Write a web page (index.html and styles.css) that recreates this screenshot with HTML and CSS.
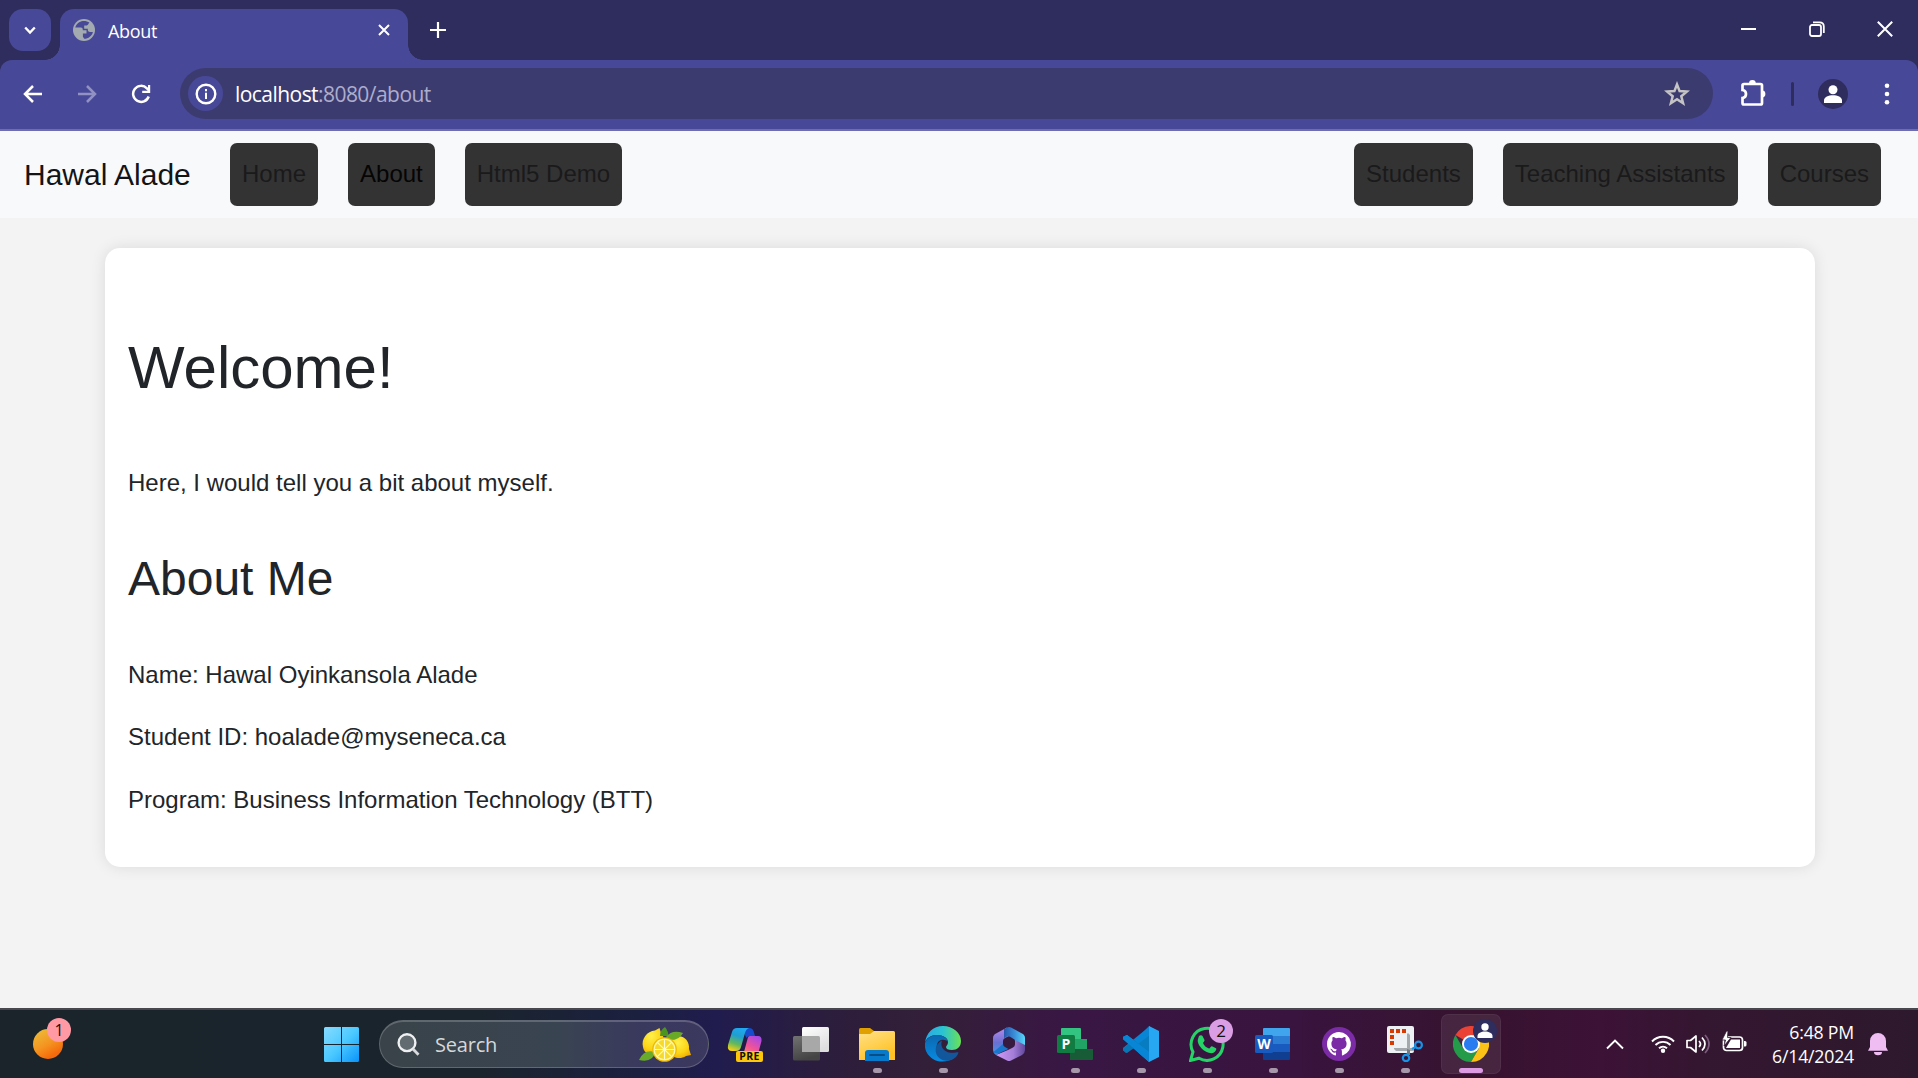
FILE: index.html
```html
<!DOCTYPE html>
<html lang="en">
<head>
<meta charset="utf-8">
<title>About</title>
<link rel="stylesheet" href="styles.css">
</head>
<body>
<div class="screen">
  <header class="tabstrip">
    <div class="tab-search"><svg width="12" height="9" viewBox="0 0 12 9"><path d="M1.2 1.5 6 6.5l4.8-5" fill="none" stroke="#fff" stroke-width="2.4"/></svg></div>
    <div class="tab">
      <svg class="globe" width="22" height="22" viewBox="0 0 22 22"><circle cx="11" cy="11" r="11" fill="#a3abb0"/><path d="M9.8 2.1C6.500 2.500 3.200 5 2.300 8.600l5.200 0c2.200 0 2.300 1.200 2.300 2.700h3.700v3.300H9.900v3.200l1.300 2c4.300 0 7.800-3 8.700-6.800h-2.600c-2.400 0-2.500-1.300-2.500-3.200h-3.600V6.400h2.600c1.300 0 1.300-1.300 2.600-2.800-1.800-1.100-4.200-1.800-6.600-1.500z" fill="#484898"/></svg>
      <span class="tab-title">About</span>
      <svg class="tab-close" width="12" height="12" viewBox="0 0 12 12"><path d="M1 1l10 10M11 1 1 11" stroke="#fff" stroke-width="2"/></svg>
    </div>
    <svg class="new-tab" width="16" height="16" viewBox="0 0 16 16"><path d="M8 0v16M0 8h16" stroke="#fff" stroke-width="2.200"/></svg>
    <div class="window-controls">
      <svg width="16" height="16" viewBox="0 0 16 16"><path d="M0 8h15" stroke="#fff" stroke-width="2"/></svg>
      <svg width="16" height="16" viewBox="0 0 16 16"><rect x="1" y="4" width="11" height="11" rx="2" fill="none" stroke="#fff" stroke-width="1.800"/><path d="M4 1.300h6.500Q14.800 1.300 14.800 5.500V12" fill="none" stroke="#fff" stroke-width="1.800"/></svg>
      <svg width="16" height="16" viewBox="0 0 16 16"><path d="M.8.8l14.400 14.400M15.200.8.8 15.200" stroke="#fff" stroke-width="2"/></svg>
    </div>
  </header>

  <div class="toolbar-back"><div class="toolbar">
    <svg class="back" width="20" height="20" viewBox="0 0 20 20"><path d="M19 10H2.500M10 2l-8 8 8 8" fill="none" stroke="#fff" stroke-width="2.5"/></svg>
    <svg class="forward" width="20" height="20" viewBox="0 0 20 20"><path d="M1 10h16.500M10 2l8 8-8 8" fill="none" stroke="#9191c3" stroke-width="2.5"/></svg>
    <svg class="reload" width="20" height="20" viewBox="0 0 20 20"><path d="M17.700 12.500A8 8 0 1 1 15.900 4.300L18 6.500" fill="none" stroke="#fff" stroke-width="2.5"/><path d="M19.200 1v8h-8V6.800h5.800V1z" fill="#fff"/></svg>
    <div class="omnibox">
      <span class="site-info"><svg width="22" height="22" viewBox="0 0 22 22"><circle cx="11" cy="11" r="9.300" fill="none" stroke="#fff" stroke-width="2.400"/><path d="M11 9.800V16M11 6v2.200" stroke="#fff" stroke-width="2"/></svg></span>
      <span class="url"><b>localhost</b><i>:8080/about</i></span>
      <svg class="star" width="26" height="26" viewBox="0 0 26 26"><path d="M13 3.400l2.600 6.700 7.200.5-5.500 4.600 1.800 7-6.100-3.900-6.100 3.900 1.800-7-5.500-4.600 7.200-.5z" fill="none" stroke="#c4c4c4" stroke-width="2.500"/></svg>
    </div>
    <svg class="puzzle" width="28" height="28" viewBox="0 0 28 28"><path d="M4 5h16.500q1.500 0 1.500 1.500v17.500q0 1.500-1.500 1.500H4q-1.500 0-1.500-1.500v-5q3.500-.5 3.500-4t-3.500-4V6.500Q2.500 5 4 5z" fill="none" stroke="#fff" stroke-width="2.700"/><path d="M9 4.500a3.400 3.400 0 0 1 6.800 0zM22 11.600a3.400 3.400 0 0 1 0 6.800z" fill="#fff"/></svg>
    <span class="divider"></span>
    <svg class="profile" width="30" height="30" viewBox="0 0 30 30"><circle cx="15" cy="15" r="15" fill="#2e2d5e"/><circle cx="15" cy="10.700" r="4.500" fill="#fff"/><path d="M6 24v-2.500c0-7 18-7 18 0V24z" fill="#fff"/></svg>
    <svg class="menu-dots" width="6" height="22" viewBox="0 0 6 22"><g fill="#fff"><circle cx="3" cy="2.700" r="2.300"/><circle cx="3" cy="11" r="2.300"/><circle cx="3" cy="19.300" r="2.300"/></g></svg>
  </div></div>

  <main class="page">
    <nav class="navbar">
      <a class="brand">Hawal Alade</a>
      <div class="links"><a class="link">Home</a><a class="link active">About</a><a class="link">Html5 Demo</a></div>
      <div class="links right"><a class="link">Students</a><a class="link">Teaching Assistants</a><a class="link">Courses</a></div>
    </nav>
    <section class="card">
      <h1>Welcome!</h1>
      <p class="intro">Here, I would tell you a bit about myself.</p>
      <h2>About Me</h2>
      <p>Name: Hawal Oyinkansola Alade</p>
      <p>Student ID: hoalade@myseneca.ca</p>
      <p>Program: Business Information Technology (BTT)</p>
    </section>
  </main>

  <footer class="taskbar">
    <div class="weather"><span class="badge">1</span></div>
    <svg class="start" width="35" height="35" viewBox="0 0 35 35"><defs><linearGradient id="win" x1="0" y1="0" x2="1" y2="1"><stop stop-color="#87dcff"/><stop offset=".5" stop-color="#4ccaff"/><stop offset="1" stop-color="#0993fa"/></linearGradient></defs><path d="M1.500 0H17v17H0V1.500Q0 0 1.500 0zM18 0h15.500Q35 0 35 1.500V17H18zM0 18h17v17H1.500Q0 35 0 33.500zM18 18h17v15.500q0 1.500-1.500 1.500H18z" fill="url(#win)"/></svg>
    <div class="search">
      <svg width="23" height="23" viewBox="0 0 23 23"><circle cx="10" cy="9.700" r="8.400" fill="#626b70" stroke="#eef0f1" stroke-width="2.400"/><path d="M16 16l5.500 5.700" stroke="#d8dadb" stroke-width="2.800"/></svg>
      <span>Search</span>
      <svg class="lemons" width="53" height="36" viewBox="0 0 53 36"><defs><radialGradient id="lem" cx=".4" cy=".3" r=".8"><stop stop-color="#fff04a"/><stop offset=".6" stop-color="#fbd414"/><stop offset="1" stop-color="#eda500"/></radialGradient></defs><path d="M4 20C2 12 8 4 16 3.500l4.500-2.500 1.500 5c6 7 3 19-6 21C10 28.500 5 26 4 20z" fill="url(#lem)"/><path d="M36 10c8-3 15 4 14 12l2 6-5 1c-6 4-14 2-16-4s0-13 5-15z" fill="url(#lem)"/><path d="M21 9q0-6 5-9 4 5 3 9z" fill="#4b941e"/><path d="M27 10q6-8 17-4-4 8-15 7z" fill="#68aa28"/><path d="M0 33q5-11 16-8-2 11-16 8z" fill="#69aa2b"/><circle cx="25.500" cy="22.500" r="12.300" fill="#eeb900"/><circle cx="25.500" cy="22.500" r="11" fill="#fff6a8"/><circle cx="25.500" cy="22.500" r="9.700" fill="#f7d927"/><path d="M25.500 12.500v20M15.500 22.500h20M18.400 15.400l14.200 14.200M32.600 15.400 18.400 29.600" stroke="#fffbd0" stroke-width="1.200"/></svg>
    </div>
    <div class="apps">
      <div class="app"><svg width="36" height="36" viewBox="0 0 36 36"><defs><linearGradient id="cp1" x1=".6" y1="0" x2=".3" y2="1"><stop stop-color="#20a8f0"/><stop offset=".35" stop-color="#1f9fd0"/><stop offset=".7" stop-color="#64b85b"/><stop offset="1" stop-color="#f4cf17"/></linearGradient><linearGradient id="cp2" x1=".8" y1="0" x2=".2" y2="1"><stop stop-color="#a648e8"/><stop offset=".5" stop-color="#f05398"/><stop offset="1" stop-color="#ff9a52"/></linearGradient></defs><path d="M17 2h5q3.500 0 4.500 3l1.500 5h-5q-2.500 0-3.500 2l-2-4z" fill="#174dcc"/><path d="M10 2h12q-3 1-4 5l-4 14q-1 4-5 4H5q-5 0-4-6L5 6q1-4 5-4z" fill="url(#cp1)"/><path d="M23 10h8q4 0 3.500 5L31 28q-1 3-4 3H11q5-1 6-5l3.500-13q.5-3 2.500-3z" fill="url(#cp2)"/></svg><span class="pre">PRE</span></div>
      <div class="app"><svg width="36" height="36" viewBox="0 0 36 36"><defs><linearGradient id="tv" x2=".6" y2="1"><stop stop-color="#fff"/><stop offset="1" stop-color="#dedede"/></linearGradient><linearGradient id="tw" x2=".3" y2="1"><stop stop-color="#727272"/><stop offset="1" stop-color="#444"/></linearGradient></defs><rect y="10" width="27" height="24.500" rx="1.500" fill="url(#tw)"/><rect x="9" y="1" width="27" height="25" rx="1.500" fill="url(#tv)"/><path d="M9 10h16.500q1.500 0 1.500 1.500V26H9z" fill="#a8a8a8"/></svg></div>
      <div class="app on"><svg width="36" height="36" viewBox="0 0 36 36"><defs><linearGradient id="fo" x2=".5" y2="1"><stop stop-color="#ffe289"/><stop offset="1" stop-color="#ffc123"/></linearGradient></defs><path d="M0 9V3.500Q0 2 1.500 2H11l4 3v5z" fill="#dfa000"/><path d="M0 8h11l4-3h19.500Q36 5 36 6.500V34H0z" fill="url(#fo)"/><path d="M6 35v-8q0-3 3-3h18q3 0 3 3v8z" fill="#087acb"/><path d="M11 29h14" stroke="#064e85" stroke-width="2" stroke-linecap="round"/></svg></div>
      <div class="app on"><svg width="36" height="36" viewBox="0 0 36 36"><defs><linearGradient id="ed1"><stop stop-color="#29a9e6"/><stop offset=".5" stop-color="#2bc3d2"/><stop offset="1" stop-color="#6be254"/></linearGradient><linearGradient id="ed2" x2="0" y2="1"><stop stop-color="#0b67af"/><stop offset="1" stop-color="#078ce3"/></linearGradient></defs><path d="M0 17C1 7 8 0 18 0s18 7 18 15c0 6-4 9-9 9-4 0-6-1-6-3 0-1 2-2 2-5 0-4-5-7-11-7S1 12 0 17z" fill="url(#ed1)"/><path d="M0 17C2 11 8 9 12 9c7 0 11 4 11 7 0-2-7-4-10 0-4 6 1 17 16 16-5 4-15 5-21 1C3 30-1 24 0 17z" fill="url(#ed2)"/><path d="M17 14.500c-7 3-9 13-2 18 4 3 10 3 14 0 2-1 4-4 4.500-6-.5-1-7 2-12-1-5-2.500-6-7-4.500-11z" fill="#12569b"/></svg></div>
      <div class="app"><svg width="32" height="34" viewBox="0 0 32 34"><defs><linearGradient id="m1" x2="0" y2="1"><stop stop-color="#b78bec"/><stop offset=".55" stop-color="#6a6fd0"/><stop offset="1" stop-color="#3f9be8"/></linearGradient><linearGradient id="m2"><stop stop-color="#2857ac"/><stop offset=".5" stop-color="#3a8fd8"/><stop offset="1" stop-color="#58d6fa"/></linearGradient><linearGradient id="m3"><stop stop-color="#cf9af5"/><stop offset=".6" stop-color="#a47ed8"/><stop offset="1" stop-color="#61479d"/></linearGradient></defs><path d="M14 .600 3 6.500Q0 8 0 11v12q0 3 3 5l8-5q-1-1-1-3v-6q0-2 2-3l4-2z" fill="url(#m1)"/><path d="M11 2.200 14 .600q2-1 4 0L29 6.500Q32 8 32 11v9l-10-6-.500-1.500-4.500-2.700q-2-1-4 .300l-2 1.100z" fill="url(#m2)"/><path d="M32 18v5q0 3-3 5l-11 5.500q-2 1-4 0L3 28l12-5 5-2.500q2-1 2-3V13z" fill="url(#m3)"/><path d="M.500 25q2.500 2.500 6 1l9-4-3.500-2q-2-1-2-3z" fill="#1876cd"/></svg></div>
      <div class="app on"><svg width="36" height="36" viewBox="0 0 36 36"><path d="M5 2h18q1 0 1 1v10H4V3q0-1 1-1z" fill="#34c481"/><path d="M10 13h20v10H10z" fill="#22a366"/><path d="M13 23h23v10q0 1-1 1H13z" fill="#185c37"/><rect y="9" width="18" height="18" rx="1.500" fill="#107c41"/><text x="9" y="23" text-anchor="middle" class="letter">P</text></svg></div>
      <div class="app on"><svg width="36" height="36" viewBox="0 0 36 36"><path d="M26 0 12 15 4 9 0 11v2l26 23z" fill="#087cc0"/><path d="M0 24l3 3 24-18V0L0 22z" fill="#0886d5"/><path d="M0 11l4-2 22 17v10L0 13z" fill="#0886d5"/><path d="M0 22.500 11 14l5 4.500L4 27 0 24.500z" fill="#0876b5"/><path d="M0 11l4-2 22 17v10L0 13z" fill="#0886d5"/><path d="M26 0l10 5v26l-10 5z" fill="#27a7f2"/></svg></div>
      <div class="app on"><svg width="36" height="36" viewBox="0 0 36 36"><path d="M1.500 34.500 4 26A16 16 0 1 1 10 32.200z" fill="none" stroke="#25d366" stroke-width="3"/><path d="M10 10c1-1 3-1 3.500 0l2 4c.5 1-1.500 2.500-1.500 3 1 3 4 5 6 5.500 1 0 2-2.500 3-2.200l4 2c1 .7-.5 4-3 4.700-7 1.500-17-8-15-14z" fill="#25d366"/></svg><span class="badge purple">2</span></div>
      <div class="app on"><svg width="36" height="36" viewBox="0 0 36 36"><path d="M8 10V3q0-1 1-1h25q1 0 1 1v7z" fill="#41a5ee"/><path d="M8 10h27v8H8z" fill="#2b7cd3"/><path d="M8 18h27v8H8z" fill="#185abd"/><path d="M8 26h27v7q0 1-1 1H9q-1 0-1-1z" fill="#103f91"/><rect y="9" width="18" height="18" rx="1.500" fill="#185abd"/><text x="9" y="23" text-anchor="middle" class="letter">W</text></svg></div>
      <div class="app on"><svg width="34" height="34" viewBox="0 0 34 34"><circle cx="17" cy="17" r="17" fill="#7b2ba6"/><path transform="translate(5 5)" fill="#fff" d="M12 0C5.400 0 0 5.400 0 12c0 5.300 3.400 9.800 8.200 11.400.6.100.8-.3.800-.6v-2.200c-3.300.7-4-1.400-4-1.400-.5-1.400-1.300-1.800-1.300-1.800-1.100-.7.100-.7.100-.7 1.200.1 1.800 1.200 1.800 1.200 1.100 1.800 2.800 1.300 3.500 1 .1-.8.400-1.300.8-1.600-2.700-.3-5.500-1.300-5.500-5.900 0-1.300.5-2.400 1.200-3.200-.1-.3-.5-1.500.1-3.200 0 0 1-.3 3.300 1.200a11.500 11.500 0 0 1 6 0c2.300-1.500 3.300-1.200 3.300-1.200.7 1.700.2 2.900.1 3.200.8.800 1.200 1.900 1.200 3.200 0 4.600-2.800 5.600-5.500 5.900.4.400.8 1.100.8 2.200v3.300c0 .3.200.7.800.6A12 12 0 0 0 12 0z"/></svg></div>
      <div class="app on"><svg width="36" height="36" viewBox="0 0 36 36"><rect width="27" height="27" rx="2" fill="#eef1f4"/><path d="M3 3h4v4H3zM9 3h4v4H9zM15 3h4v4h-4zM3 9h4v4H3zM3 15h4v4H3z" fill="#d83b01"/><path d="M21 7l2 2v13h4v3h-4v4h-3v-4H9l-2-2v-1h13V8z" fill="#a4a9ad"/><path d="M20 23l3 1v5h-3z" fill="#737a80"/><g fill="none" stroke="#1594e8" stroke-width="2.200"><circle cx="31.500" cy="19" r="3.400"/><circle cx="19" cy="32" r="3.200"/><path d="M25 23l3.500-2M21 27l-1 2"/></g></svg></div>
      <div class="app on current"><svg width="36" height="36" viewBox="0 0 36 36"><path d="M18 18 2.400 9A18 18 0 0 1 33.600 9z" fill="#ea4335"/><path d="M18 18l-7.800 4.500L2.400 9A18 18 0 0 0 18 36l7.800-13.500z" fill="#249b48"/><path d="M18 9h15.600A18 18 0 0 1 18 36l7.800-13.500z" fill="#fbc116"/><circle cx="18" cy="18" r="9" fill="#fff"/><circle cx="18" cy="18" r="7.100" fill="#297cf0"/></svg><svg class="person" width="24" height="24" viewBox="0 0 24 24"><circle cx="12" cy="12" r="12" fill="#2e2d5e"/><circle cx="12" cy="8" r="3.700" fill="#fff"/><path d="M4.500 19v-2c0-6 15-6 15 0v2z" fill="#fff"/></svg></div>
    </div>
    <div class="tray">
      <svg class="chev" width="18" height="11" viewBox="0 0 18 11"><path d="M1 9.500l8-8 8 8" fill="none" stroke="#fff" stroke-width="1.900"/></svg>
      <svg class="wifi" width="24" height="20" viewBox="0 0 24 20"><g fill="none" stroke="#fff" stroke-width="1.900"><path d="M1 7.500a15 15 0 0 1 22 0M4.500 11a10.500 10.500 0 0 1 15 0M8 14.200a6 6 0 0 1 8 0"/></g><circle cx="12" cy="16.800" r="2.200" fill="#fff"/></svg>
      <svg class="speaker" width="24" height="20" viewBox="0 0 24 20"><g fill="none" stroke="#fff" stroke-width="1.700" stroke-linejoin="round"><path d="M1 6.500h3.500L10 2v16l-5.500-4.500H1z"/><path d="M13 7q3 3 0 6M16 3.500q6 6.500 0 13"/><path d="M19 1q8 9 0 18" stroke="#7b5c7c"/></g></svg>
      <svg class="battery" width="25" height="22" viewBox="0 0 25 22"><rect x="1.500" y="6" width="19" height="13.500" rx="3" fill="none" stroke="#fff" stroke-width="1.700"/><path d="M22 10h1q1.500 0 1.500 1.500v2.500q0 1.500-1.500 1.500h-1z" fill="#fff"/><path d="M9 8.500h9v8.500H4z" fill="#fff"/><path d="M4.500 0 0 9h3.500L2 15l7-8.500H5.500L6 0z" fill="#fff" stroke="#32162f" stroke-width=".8"/></svg>
      <div class="clock"><span>6:48 PM</span><span>6/14/2024</span></div>
      <svg class="bell" width="20" height="24" viewBox="0 0 20 24"><path d="M2 15V9a8 8 0 0 1 16 0v6l2 3.800H0z" fill="#f0bdf3"/><path d="M6 20h8a4 3.300 0 0 1-8 0z" fill="#f0bdf3"/></svg>
    </div>
  </footer>
</div>
</body>
</html>
```
FILE: styles.css
```css
* { box-sizing: border-box; }
body { margin: 0; overflow: hidden; font-family: "Liberation Sans", Arial, sans-serif; color: #212529; }
svg { display: block; flex: none; }
.screen { width: 1918px; height: 1078px; display: flex; flex-direction: column; }

.tabstrip { height: 60px; flex: none; background: #2e2d5e; display: flex; align-items: flex-start; padding: 9px 25px 0 9px; font-family: "Open Sans", sans-serif; }
.tab-search { width: 42px; height: 42px; border-radius: 14px; background: #484898; display: flex; align-items: center; justify-content: center; }
.tab { position: relative; width: 348px; height: 51px; margin-left: 9px; padding: 0 18px 9px 13px; border-radius: 14px 14px 0 0; background: #484898; display: flex; align-items: center; }
.tab::before, .tab::after { content: ""; position: absolute; bottom: 0; width: 15px; height: 15px; }
.tab::before { left: -15px; background: radial-gradient(circle at 0 0, transparent 14.5px, #484898 15px); }
.tab::after { right: -15px; background: radial-gradient(circle at 100% 0, transparent 14.5px, #484898 15px); }
.tab-title { margin: 2px auto 0 13px; color: #fff; font-size: 18px; line-height: 24px; letter-spacing: -.3px; }
.new-tab { margin: 13px 0 0 22px; }
.window-controls { margin: 12px 0 0 auto; display: flex; gap: 52px; }

.toolbar-back { background: #2e2d5e; flex: none; }
.toolbar { height: 71px; padding: 0 28px 2px 23px; background: #484898; border-bottom: 2px solid #6e6db0; border-radius: 12px 12px 0 0; display: flex; align-items: center; }
.forward, .reload { margin-left: 34px; }
.omnibox { width: 1533px; height: 51px; margin-left: 29px; padding: 0 23px 0 8px; border-radius: 26px; background: #3c3b70; display: flex; align-items: center; }
.site-info { width: 35px; height: 35px; border-radius: 50%; background: #484898; display: flex; align-items: center; justify-content: center; }
.url { margin: 1px auto 0 12px; font: 21px/28px "Open Sans", sans-serif; letter-spacing: -.55px; }
.url b { font-weight: 400; color: #fff; }
.url i { font-style: normal; color: #adadcc; }
.puzzle { margin-left: 27px; margin-top: -2px; }
.divider { width: 3px; height: 24px; margin-left: 23px; border-radius: 2px; background: #2e2d5e; }
.profile { margin-left: 24px; }
.menu-dots { margin-left: auto; }

.page { flex: 1; min-height: 0; background: #f3f3f3; }
.navbar { height: 87px; padding: 0 37px 0 24px; background: #f8f9fb; display: flex; align-items: center; }
.brand { width: 206px; font-size: 30px; line-height: 45px; color: #141415; white-space: nowrap; }
.links { display: flex; gap: 30px; }
.links.right { margin-left: auto; }
.link { height: 63px; padding: 0 12px; border-radius: 7px; background: #333; color: #1a1a1b; font-size: 24px; line-height: 61px; white-space: nowrap; }
.link.active { color: #050505; }

.card { width: 1710px; height: 619px; margin: 30px 0 0 105px; padding: 84px 23px 0; border-radius: 15px; background: #fff; box-shadow: 0 0 15px rgba(0,0,0,.1); }
.card h1 { margin: 0 0 61px; font-weight: 400; font-size: 60px; line-height: 72px; }
.card h2 { margin: 0 0 49px; font-weight: 400; font-size: 48px; line-height: 58px; }
.card p { margin: 0 0 26.400px; font-size: 24px; line-height: 36px; }
.card .intro { margin-bottom: 49px; }

.taskbar { height: 70px; flex: none; border-top: 2px solid #48474e; background: linear-gradient(90deg, #1b242b 0, #1a242d 480px, #1b2040 640px, #201c4e 715px, #2b1d3d 820px, #331f38 930px, #391744 1060px, #38143e 1300px, #37132f 1480px, #3c1237 1600px, #341630 1700px, #2d192d 1918px); display: flex; align-items: center; padding-left: 33px; font-family: "Open Sans", sans-serif; }
.weather { position: relative; width: 30px; height: 30px; border-radius: 50%; background: linear-gradient(150deg, #edbd38 5%, #f49420 50%, #f46a0c 80%); }
.badge { position: absolute; left: 14px; top: -11px; width: 24px; height: 24px; border-radius: 50%; background: #ff99a4; color: #111; font-size: 16px; line-height: 24px; text-align: center; }
.badge.purple { left: 32px; top: 5px; background: #db9de4; font-size: 17px; }
.start { margin-left: 261px; }
.search { width: 330px; height: 48px; margin-left: 20px; padding: 0 16px 0 17px; border: 1px solid rgba(255,255,255,.2); border-top-width: 2px; border-radius: 24px; background: linear-gradient(90deg, #394349, #394452 55%, #39395e 80%, #3c385f); display: flex; align-items: center; color: #d5d8da; font-size: 20px; letter-spacing: -.2px; }
.search span { margin-left: 15px; }
.lemons { margin-left: auto; }
.apps { margin-left: 6px; display: flex; gap: 6px; }
.app { position: relative; width: 60px; height: 60px; display: flex; align-items: center; justify-content: center; }
.app.on::after { content: ""; position: absolute; left: 25.500px; bottom: 1px; width: 9px; height: 5px; border-radius: 3px; background: #a797aa; }
.app.current { border-radius: 7px; background: rgba(255,255,255,.08); box-shadow: inset 0 0 0 1px rgba(255,255,255,.05); }
.app.on.current::after { left: 18px; width: 24px; background: #dd9be4; }
.pre { position: absolute; left: 21px; bottom: 12px; width: 27px; height: 11px; border-radius: 2px; background: #fdc80b; color: #111; font-size: 10.500px; font-weight: 700; letter-spacing: .4px; line-height: 11px; text-align: center; }
.letter { font: 700 14px "Open Sans", sans-serif; fill: #fff; }
.person { position: absolute; left: 32px; top: 5px; }
.tray { margin-left: 105px; display: flex; align-items: center; }
.wifi { margin-left: 27px; }
.speaker { margin-left: 11px; }
.battery { margin-left: 12px; margin-top: -5px; }
.clock { width: 107px; margin-top: -1px; display: flex; flex-direction: column; align-items: flex-end; color: #fff; font-size: 17.700px; line-height: 24px; letter-spacing: -.2px; }
.bell { margin-left: 14px; }
```
